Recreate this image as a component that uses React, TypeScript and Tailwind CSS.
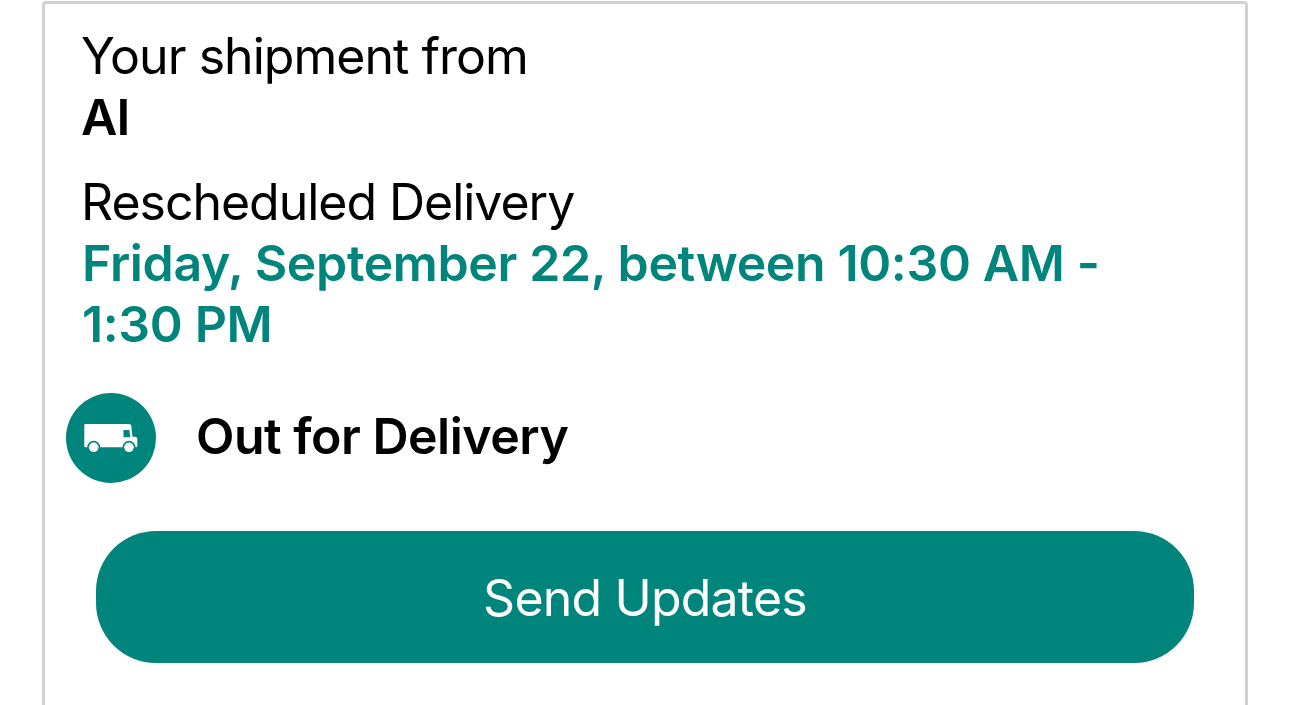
import React from "react";

const TruckIcon: React.FC = () => {
    return (
        <svg viewBox="0 0 90 90" className="h-[90px] w-[90px] shrink-0">
            <circle cx="45" cy="45" r="45" fill="#00857c" />
            <path
                d="M19.3 31H63q2 0 2.300 2l1.200 10.800h2.500q2.300 0 2.300 2.300V53q0 1.300-1.300 1.300H19.300q-1 0-1-1V32q0-1 1-1z"
                fill="#fff"
            />
            <path d="M57.500 37h5.800l1 7.300h-6.800z" fill="#00857c" />
            <circle cx="27.700" cy="54.300" r="6.500" fill="#00857c" />
            <circle cx="63" cy="54.300" r="6.500" fill="#00857c" />
            <circle cx="27.700" cy="54.300" r="4.800" fill="#fff" />
            <circle cx="63" cy="54.300" r="4.800" fill="#fff" />
        </svg>
    );
};

const App: React.FC = () => {
    return (
        <div className="h-[705px] w-[1290px] overflow-hidden bg-white px-[42px] pt-px font-['Inter',sans-serif] text-black">
            <div className="h-[720px] rounded-[4px] border-[3px] border-[#d1d1d1] pt-[22px]">
                <div className="pr-8 pl-[37px] text-[50px] leading-[61px]">
                    <div className="-ml-px tracking-[-0.98px]">
                        Your shipment from
                    </div>
                    <div className="-ml-px font-semibold tracking-[-1px]">
                        AI
                    </div>
                    <div className="mt-6 -ml-px tracking-[-1.03px]">
                        Rescheduled Delivery
                    </div>
                    <div className="font-semibold tracking-[-0.37px] text-[#00857c]">
                        Friday, September 22, between 10:30 AM{" "}
                        {/* keep the hyphen at lowercase height after "AM" */}
                        <span className="[font-feature-settings:'calt'_0]">
                            -
                        </span>
                        <br />
                        1:30 PM
                    </div>
                </div>
                <div className="mt-[38px] flex items-center gap-10 pl-[21px]">
                    <TruckIcon />
                    <div className="pb-1 text-[50px] leading-[61px] font-semibold tracking-[-0.5px]">
                        Out for Delivery
                    </div>
                </div>
                <button className="mx-auto mt-12 flex h-[132px] w-[1098px] items-center justify-center rounded-[60px] bg-[#00857c] pt-0.5 text-[50px] tracking-[-0.8px] text-white">
                    Send Updates
                </button>
            </div>
        </div>
    );
};
export default App;
